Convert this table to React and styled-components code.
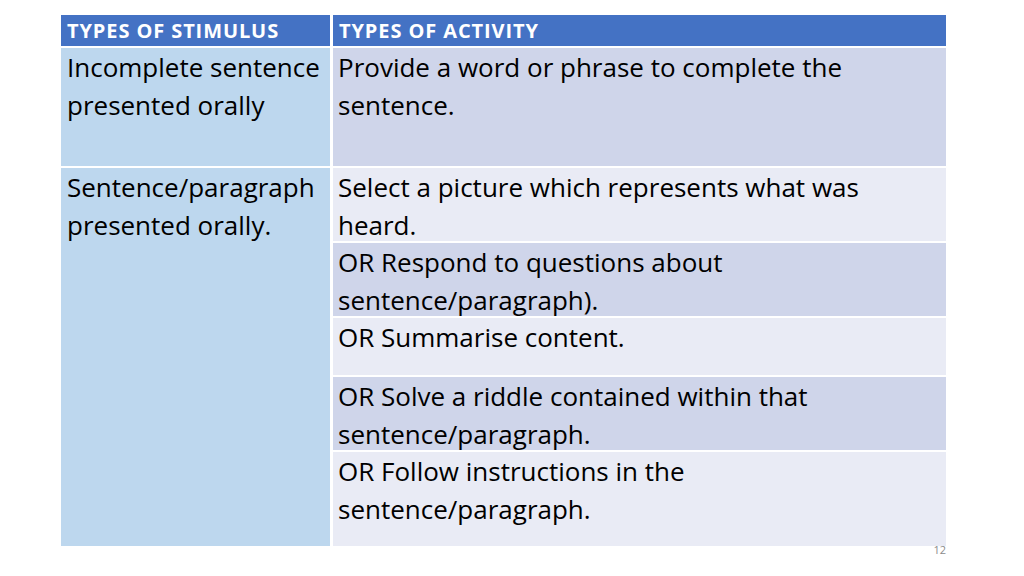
import React from 'react';
import styled, { createGlobalStyle } from 'styled-components';

const GlobalStyle = createGlobalStyle`
  html, body {
    margin: 0;
    padding: 0;
    background: #ffffff;
  }
  body {
    font-family: "Open Sans", Calibri, "Liberation Sans", sans-serif;
    color: #000;
  }
`;

// right-hand rows of the second stimulus; lines are broken as on the slide
const rows = [
  { lines: ['Select a picture which represents what was', 'heard.'], band: 'light' },
  { lines: ['OR Respond to questions about', 'sentence/paragraph).'], band: 'dark' },
  { lines: ['OR Summarise content.'], band: 'light' },
  { lines: ['OR Solve a riddle contained within that', 'sentence/paragraph.'], band: 'dark' },
  { lines: ['OR Follow instructions in the', 'sentence/paragraph.'], band: 'light' },
];

const Lines = ({ lines }) =>
  lines.map((l, i) => (
    <Line key={i}>{l}</Line>
  ));

export default function App() {
  return (
    <>
      <GlobalStyle />
      <Slide>
        <Table>
          <HeadCell>TYPES OF STIMULUS</HeadCell>
          <HeadCell>TYPES OF ACTIVITY</HeadCell>

          <FirstCell>
            <Lines lines={['Incomplete sentence', 'presented orally']} />
          </FirstCell>
          <Cell band="dark">
            <Lines lines={['Provide a word or phrase to complete the', 'sentence.']} />
          </Cell>

          <FirstCell span={rows.length}>
            <Lines lines={['Sentence/paragraph', 'presented orally.']} />
          </FirstCell>
          {rows.map((r) => (
            <Cell key={r.lines[0]} band={r.band}>
              <Lines lines={r.lines} />
            </Cell>
          ))}
        </Table>
        <PageNum>12</PageNum>
      </Slide>
    </>
  );
}

const Slide = styled.div`
  width: 1024px;
  height: 576px;
  position: relative;
  box-sizing: border-box;
  padding: 15px 0 0 61px;
  overflow: hidden;
`;

const Table = styled.div`
  display: grid;
  grid-template-columns: 269px 613px;
  grid-template-rows: 31px 118px 73px 73px 57px 73px 94px;
  column-gap: 3px;
  row-gap: 2px;
  width: 885px;
`;

const HeadCell = styled.div`
  background: #4472c4;
  color: #ffffff;
  font-weight: 700;
  font-size: 20px;
  line-height: 32px;
  padding: 0 6px;
  white-space: nowrap;
  letter-spacing: 0.9px;
`;

const FirstCell = styled.div`
  background: #bdd7ee;
  padding: 0 6px;
  grid-row: span ${(p) => p.span || 1};
`;

const Cell = styled.div`
  background: ${(p) => (p.band === 'dark' ? '#cfd5ea' : '#e9ebf5')};
  padding: 0 5px;
`;

const Line = styled.div`
  font-size: 26px;
  line-height: 38px;
  white-space: nowrap;
`;

const PageNum = styled.div`
  position: absolute;
  right: 78px;
  top: 542px;
  font-size: 11px;
  color: #8b8b8b;
`;
